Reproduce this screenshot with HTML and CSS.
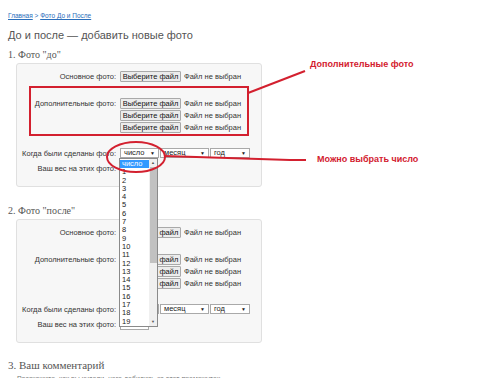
FILE: index.html
```html
<html>
    <head>
        <title>До и после</title>
        <link rel="stylesheet" href="styles.css">
    </head>
    <body>
        <div class="page">
            <div class="crumbs"><a href="#">Главная</a> &gt; <a href="#">Фото До и После</a></div>
            <h1 class="title">До и после — добавить новые фото</h1>

            <h3 class="step">1. Фото "до"</h3>
            <div class="box">
                <div class="row">
                    <label>Основное фото:</label>
                    <div class="file"><span class="btn">Выберите файл</span> Файл не выбран</div>
                </div>
                <div class="row extra">
                    <label>Дополнительные фото:</label>
                    <div class="files">
                        <div class="file"><span class="btn">Выберите файл</span> Файл не выбран</div>
                        <div class="file"><span class="btn">Выберите файл</span> Файл не выбран</div>
                        <div class="file"><span class="btn">Выберите файл</span> Файл не выбран</div>
                    </div>
                </div>
                <div class="row when">
                    <label>Когда были сделаны фото:</label>
                    <div class="selects">
                        <span class="sel day">число</span>
                        <span class="sel month">месяц</span>
                        <span class="sel year">год</span>
                    </div>
                </div>
                <div class="row weight">
                    <label>Ваш вес на этих фото:</label>
                    <span class="inp"></span>
                </div>
            </div>

            <h3 class="step second">2. Фото "после"</h3>
            <div class="box">
                <div class="row">
                    <label>Основное фото:</label>
                    <div class="file"><span class="btn">Выберите файл</span> Файл не выбран</div>
                </div>
                <div class="row extra">
                    <label>Дополнительные фото:</label>
                    <div class="files">
                        <div class="file"><span class="btn">Выберите файл</span> Файл не выбран</div>
                        <div class="file"><span class="btn">Выберите файл</span> Файл не выбран</div>
                        <div class="file"><span class="btn">Выберите файл</span> Файл не выбран</div>
                    </div>
                </div>
                <div class="row when">
                    <label>Когда были сделаны фото:</label>
                    <div class="selects">
                        <span class="sel day">число</span>
                        <span class="sel month">месяц</span>
                        <span class="sel year">год</span>
                    </div>
                </div>
                <div class="row weight">
                    <label>Ваш вес на этих фото:</label>
                    <span class="inp"></span>
                </div>
            </div>

            <h3 class="step last">3. Ваш комментарий</h3>
            <p class="hint">Расскажите, как вы худели, чего добились за этот промежуток</p>
        </div>

        <!-- открытый список "число" -->
        <div class="droplist">
            <div class="opts">
                <div class="opt on">число</div>
                <div class="opt">1</div><div class="opt">2</div><div class="opt">3</div>
                <div class="opt">4</div><div class="opt">5</div><div class="opt">6</div>
                <div class="opt">7</div><div class="opt">8</div><div class="opt">9</div>
                <div class="opt">10</div><div class="opt">11</div><div class="opt">12</div>
                <div class="opt">13</div><div class="opt">14</div><div class="opt">15</div>
                <div class="opt">16</div><div class="opt">17</div><div class="opt">18</div>
                <div class="opt">19</div>
            </div>
            <div class="scroll">
                <span class="arr">&#9650;</span>
                <span class="thumb"></span>
                <span class="arr down">&#9660;</span>
            </div>
        </div>

        <!-- пометки -->
        <svg class="marks" width="500" height="378" viewBox="0 0 500 378">
            <rect x="30" y="87" width="218" height="48" fill="none" stroke="#d3202f" stroke-width="2"/>
            <line x1="248" y1="93" x2="305" y2="71" stroke="#d3202f" stroke-width="2"/>
            <ellipse cx="136" cy="157" rx="29" ry="15" fill="none" stroke="#d3202f" stroke-width="2"/>
            <path d="M165 156 L290 160 L306 160" fill="none" stroke="#d3202f" stroke-width="2"/>
        </svg>
        <span class="note n1">Дополнительные фото</span>
        <span class="note n2">Можно выбрать число</span>
    </body>
</html>
```

FILE: styles.css
```css
body{
    margin: 0;
    background: #fff;
    font-family: "Liberation Sans", Arial, sans-serif;
    color: #333;
}
.page{
    padding: 10px 8px 0 8px;
    width: 484px;
}
.crumbs{
    font-size: 6.5px;
    line-height: 12px;
    color: #2a6ebb;
}
.crumbs a{
    color: #2a6ebb;
}
.title{
    margin: 5px 0 0 0;
    font-size: 11px;
    line-height: 16px;
    font-weight: normal;
    color: #555;
}
.step{
    margin: 6px 0 0 0;
    font-family: "Liberation Serif", Georgia, serif;
    font-size: 10px;
    line-height: 12px;
    font-weight: normal;
    color: #555;
}
.second{
    margin-top: 18px;
}
.box{
    margin: 2px 0 0 8px;
    width: 244px;
    background: #f7f7f7;
    border: 1px solid #e0e0e0;
    border-radius: 3px;
    padding: 7px 0 12px 0;
    font-size: 7.5px;
}
.row{
    display: grid;
    grid-template-columns: 99px auto;
    column-gap: 4px;
    align-items: center;
}
.row label{
    text-align: right;
    color: #333;
}
.extra{
    margin-top: 16px;
    align-items: start;
}
.extra label{
    padding-top: 1px;
}
.files{
    display: flex;
    flex-direction: column;
    gap: 1px;
}
.when{
    margin-top: 15px;
}
.weight{
    margin-top: 5px;
}
.file{
    height: 11px;
    display: flex;
    align-items: center;
    gap: 3px;
    color: #333;
    white-space: nowrap;
}
.btn{
    display: inline-block;
    width: 59px;
    height: 9px;
    line-height: 9px;
    text-align: center;
    background: #ececec;
    border: 1px solid #a9a9a9;
    border-radius: 1px;
    color: #111;
    font-size: 7.5px;
}
.selects{
    display: flex;
    gap: 1px;
    height: 10px;
}
.sel{
    position: relative;
    display: inline-block;
    height: 8px;
    line-height: 8px;
    padding-left: 3px;
    background: #fff;
    border: 1px solid #a9a9a9;
    color: #222;
}
.sel:after{
    content: "\25BC";
    position: absolute;
    right: 3px;
    top: 0;
    font-size: 5px;
}
.day{ width: 34px; }
.month{ width: 44px; }
.year{ width: 35px; }
.inp{
    display: inline-block;
    width: 27px;
    height: 9px;
    background: #fff;
    border: 1px solid #a9a9a9;
}
.last{
    margin-top: 16px;
    font-size: 11px;
}
.hint{
    margin: 4px 0 0 9px;
    font-size: 7px;
    color: #777;
}
.droplist{
    position: absolute;
    left: 119px;
    top: 158px;
    width: 37px;
    height: 167px;
    background: #fff;
    border: 1px solid #8a8a8a;
    display: flex;
    font-size: 7.5px;
}
.opts{
    flex: 1;
    overflow: hidden;
}
.opt{
    height: 8.3px;
    line-height: 8.3px;
    padding-left: 2px;
    color: #222;
}
.opt.on{
    margin-top: 1px;
    background: #3399ff;
    color: #fff;
}
.scroll{
    width: 8px;
    background: #f0f0f0;
    display: flex;
    flex-direction: column;
    align-items: center;
}
.arr{
    font-size: 4px;
    line-height: 8px;
    color: #555;
}
.thumb{
    width: 7px;
    height: 96px;
    background: #c1c1c1;
}
.down{
    margin-top: auto;
}
.marks{
    position: absolute;
    left: 0;
    top: 0;
}
.note{
    position: absolute;
    font-size: 9px;
    font-weight: bold;
    color: #d3202f;
}
.n1{
    left: 310px;
    top: 59px;
}
.n2{
    left: 317px;
    top: 154px;
}
```
